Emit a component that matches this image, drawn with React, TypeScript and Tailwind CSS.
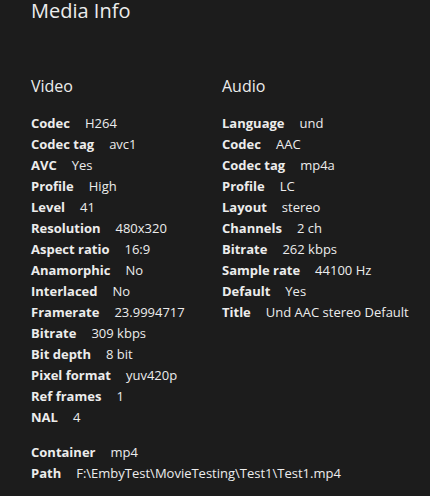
const video: [string, string][] = [
  ["Codec", "H264"],
  ["Codec tag", "avc1"],
  ["AVC", "Yes"],
  ["Profile", "High"],
  ["Level", "41"],
  ["Resolution", "480x320"],
  ["Aspect ratio", "16:9"],
  ["Anamorphic", "No"],
  ["Interlaced", "No"],
  ["Framerate", "23.9994717"],
  ["Bitrate", "309 kbps"],
  ["Bit depth", "8 bit"],
  ["Pixel format", "yuv420p"],
  ["Ref frames", "1"],
  ["NAL", "4"],
];

const audio: [string, string][] = [
  ["Language", "und"],
  ["Codec", "AAC"],
  ["Codec tag", "mp4a"],
  ["Profile", "LC"],
  ["Layout", "stereo"],
  ["Channels", "2 ch"],
  ["Bitrate", "262 kbps"],
  ["Sample rate", "44100 Hz"],
  ["Default", "Yes"],
  ["Title", "Und AAC stereo Default"],
];

const Row = ({ label, value }: { label: string; value: string }) => (
  <div className="flex gap-[15px] whitespace-nowrap text-[13px] leading-[21px]">
    <span className="font-bold">{label}</span>
    <span>{value}</span>
  </div>
);

const Stream = ({ title, rows }: { title: string; rows: [string, string][] }) => (
  <div>
    <h3 className="mb-[17px] text-[16px] leading-[20px]">{title}</h3>
    {rows.map(([label, value]) => (
      <Row key={label} label={label} value={value} />
    ))}
  </div>
);

export default function App() {
  return (
    <div className="h-[496px] w-[430px] overflow-hidden bg-[#1c1c1c] pl-[31px] font-['Open_Sans',sans-serif] text-[#ececec]">
      <h2 className="pt-[1px] text-[20px] leading-[20px]">Media Info</h2>
      <div className="mt-[55px] grid grid-cols-[191px_1fr]">
        <Stream title="Video" rows={video} />
        <Stream title="Audio" rows={audio} />
      </div>
      <div className="mt-[14px]">
        <Row label="Container" value="mp4" />
        <Row label="Path" value="F:\EmbyTest\MovieTesting\Test1\Test1.mp4" />
      </div>
    </div>
  );
}
